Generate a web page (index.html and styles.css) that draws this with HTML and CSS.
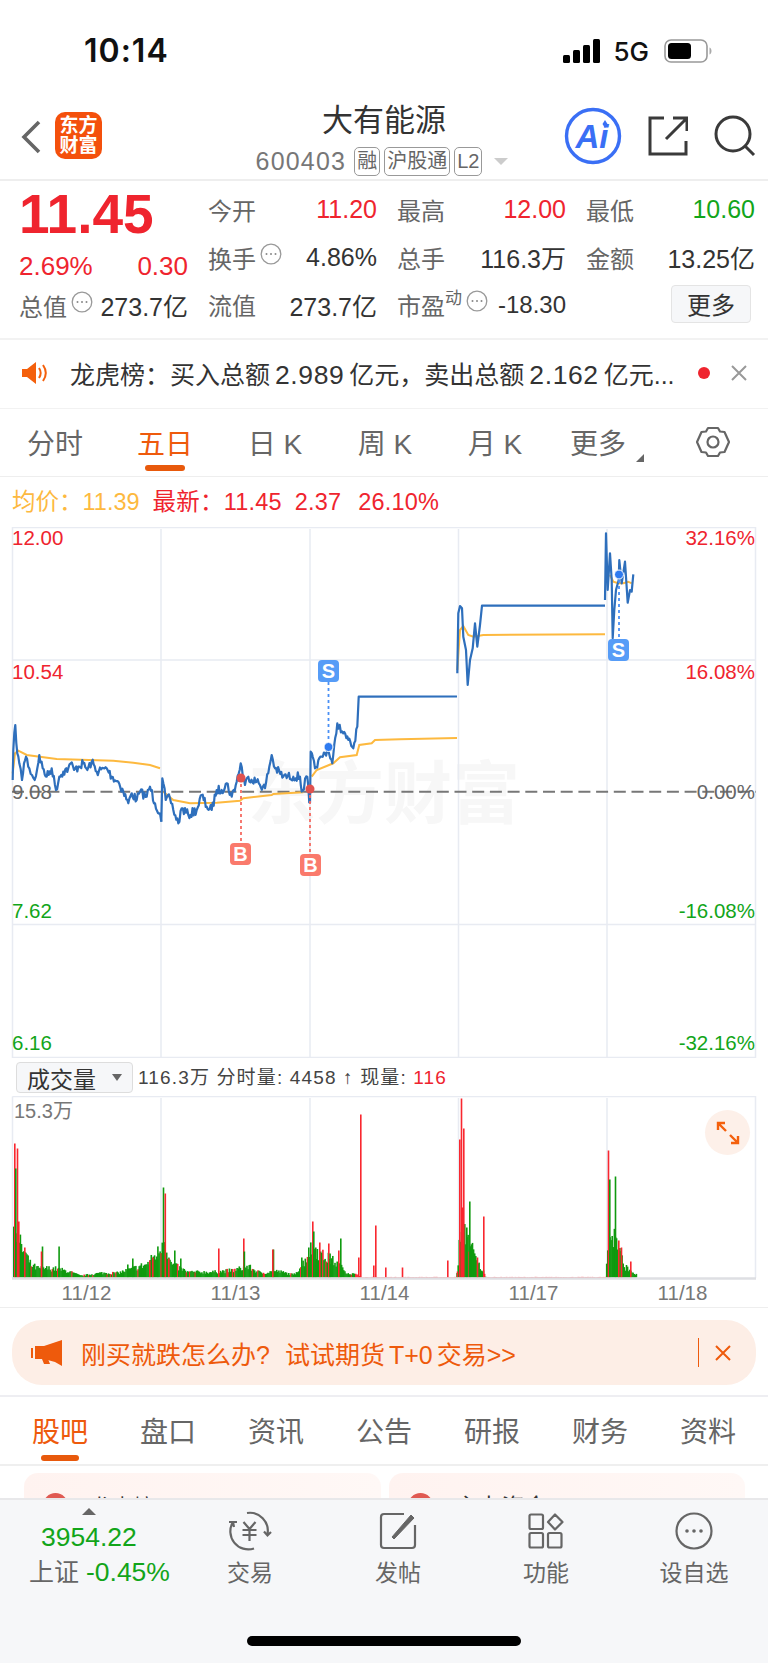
FILE: index.html
```html
<!DOCTYPE html>
<html lang="zh-CN">
<head>
  <meta charset="UTF-8" />
  <meta name="viewport" content="width=device-width, initial-scale=1" />
  <title>大有能源</title>
  <link rel="stylesheet" href="styles.css">
</head>
<body>

<!-- Status bar -->
<div class="status-bar">
  <span class="clock">10:14</span>
  <div class="status-right">
    <svg width="38" height="24" viewBox="0 0 38 24"><rect x="0" y="16" width="7" height="8" rx="1.5"/><rect x="10" y="11" width="7" height="13" rx="1.5"/><rect x="20" y="6" width="7" height="18" rx="1.5"/><rect x="30" y="0" width="7" height="24" rx="1.5"/></svg>
    <span class="net">5G</span>
    <svg width="48" height="24" viewBox="0 0 48 24"><rect x="1" y="1" width="42" height="22" rx="6" fill="none" stroke="#999" stroke-width="1.6"/><rect x="4" y="4" width="23" height="16" rx="3.5"/><path d="M45.5 8.5c1.5 .6 2 2 2 3.5s-.5 2.900-2 3.500z" fill="#aaa"/></svg>
  </div>
</div>

<!-- Header -->
<div class="header">
  <svg class="back" width="20" height="34" viewBox="0 0 20 34"><path d="M18 2L3 17l15 15" fill="none" stroke="#666" stroke-width="3.600"/></svg>
  <div class="logo"><span>东方</span><span>财富</span></div>
  <div class="title">
    <div class="name">大有能源</div>
    <div class="code">
      <span>600403</span>
      <span class="tag">融</span>
      <span class="tag">沪股通</span>
      <span class="tag">L2</span>
      <i class="tag-arrow"></i>
    </div>
  </div>
  <div class="head-icons">
    <svg width="58" height="58" viewBox="0 0 58 58">
      <circle cx="29" cy="29" r="26.500" fill="#fff" stroke="#3a6ff5" stroke-width="3.400"/>
      <text x="28" y="41" class="ai-text">Ai</text>
      <path d="M41 13l2.500 4 -2.500 4 -2.500-4z" fill="#3a6ff5"/>
    </svg>
    <svg width="40" height="40" viewBox="0 0 40 40" fill="none" stroke="#3a3a3a" stroke-width="3"><path d="M16 2H2v36h36V25"/><path d="M18 23L38 3M25 2h14v13" /></svg>
    <svg width="42" height="42" viewBox="0 0 42 42" fill="none" stroke="#3a3a3a" stroke-width="3"><circle cx="19" cy="19" r="17"/><path d="M31 31l9 9"/></svg>
  </div>
</div>

<!-- Quote -->
<div class="quote">
  <div class="quote-left">
    <div class="price">11.45</div>
    <div class="change"><span>2.69%</span><span>0.30</span></div>
    <div class="cell total">
      <label>总值<svg class="more-dot" width="22" height="22" viewBox="0 0 22 22"><use href="#dots"/></svg></label>
      <b>273.7亿</b>
    </div>
  </div>
  <div class="quote-grid">
    <div class="cell"><label>今开</label><b class="up">11.20</b></div>
    <div class="cell"><label>最高</label><b class="up">12.00</b></div>
    <div class="cell"><label>最低</label><b class="down">10.60</b></div>
    <div class="cell"><label>换手<svg class="more-dot" width="22" height="22" viewBox="0 0 22 22"><use href="#dots"/></svg></label><b>4.86%</b></div>
    <div class="cell"><label>总手</label><b>116.3万</b></div>
    <div class="cell"><label>金额</label><b>13.25亿</b></div>
    <div class="cell"><label>流值</label><b>273.7亿</b></div>
    <div class="cell"><label>市盈<sup>动</sup><svg class="more-dot" width="22" height="22" viewBox="0 0 22 22"><use href="#dots"/></svg></label><b class="pe">-18.30</b></div>
    <div class="cell more-cell"><button class="more-btn">更多</button></div>
  </div>
</div>

<!-- Notice -->
<div class="notice">
  <svg width="27" height="22" viewBox="0 0 27 22"><path d="M0 7h5l9-7v22l-9-7H0z" fill="#f4600c"/><path d="M17 6c2 3 2 7 0 10M21 3c3.500 5 3.500 11 0 16" fill="none" stroke="#f4600c" stroke-width="2"/></svg>
  <span class="notice-text">龙虎榜：买入总额<span class="num">2.989</span>亿元，卖出总额<span class="num">2.162</span>亿元...</span>
  <i class="red-dot"></i>
  <svg class="notice-x" width="16" height="16" viewBox="0 0 16 16"><path d="M1 1l14 14M15 1L1 15" stroke="#999" stroke-width="2"/></svg>
</div>

<!-- Period tabs -->
<div class="periods">
  <span>分时</span>
  <span class="active">五日</span>
  <span>日 K</span>
  <span>周 K</span>
  <span>月 K</span>
  <span class="has-corner">更多</span>
  <svg class="gear" width="34" height="32" viewBox="0 0 34 32" fill="none" stroke="#666" stroke-width="2.200"><path d="M12 2h10l2 3.500 4.500 .5L33 16l-4.500 10-4.500 .5L22 30H12l-2-3.500-4.500-.5L1 16 5.500 6 10 5.500z" stroke-linejoin="round"/><circle cx="17" cy="16" r="5.500"/></svg>
</div>

<!-- Legend -->
<div class="legend">
  <span class="avg">均价：11.39</span>
  <span class="latest">最新：11.45</span>
  <span class="latest">2.37</span>
  <span class="latest pct">26.10%</span>
</div>

<!-- Price chart -->
<svg class="price-chart" width="768" height="531" viewBox="0 527 768 531">
  <text x="248" y="818" class="watermark">东方财富</text>
  <path class="grid-line" d="M12.500 527.500H755.500V1057.500H12.500ZM12.500 660H755.500M12.500 924.500H755.500M161 529V1057M310 529V1057M458.500 529V1057M607 529V1057"/>
  <path d="M12 791.700H756" stroke="#777" stroke-width="2" stroke-dasharray="12 5.700"/>
  <g class="axis">
    <text x="12" y="545" class="up-fill">12.00</text>
    <text x="12" y="679" class="up-fill">10.54</text>
    <text x="12" y="799" class="flat-fill">9.08</text>
    <text x="12" y="918" class="down-fill">7.62</text>
    <text x="12" y="1050" class="down-fill">6.16</text>
    <text x="755" y="545" class="up-fill end">32.16%</text>
    <text x="755" y="679" class="up-fill end">16.08%</text>
    <text x="755" y="799" class="flat-fill end">0.00%</text>
    <text x="755" y="918" class="down-fill end">-16.08%</text>
    <text x="755" y="1050" class="down-fill end">-32.16%</text>
  </g>
  <g id="avgLines" fill="none" stroke="#fdb93f" stroke-width="2"></g>
  <g id="priceLines" fill="none" stroke="#2e6fbc" stroke-width="2.200" stroke-linejoin="round"></g>

  <g class="trade buy">
    <path d="M241 778V843M310 789V854"/>
    <circle cx="241" cy="778" r="4.500"/><circle cx="310" cy="789" r="4.500"/>
    <rect x="230" y="843" width="21" height="22" rx="4"/><rect x="300" y="854" width="21" height="22" rx="4"/>
    <text x="240.500" y="861">B</text><text x="310.500" y="872">B</text>
  </g>
  <g class="trade sell">
    <path d="M328.500 682V747M619 574V639"/>
    <circle cx="328.500" cy="747" r="4.500"/><circle cx="619" cy="574.500" r="4.500"/>
    <rect x="318" y="660" width="21" height="22" rx="4"/><rect x="608" y="639" width="21" height="22" rx="4"/>
    <text x="328.500" y="678">S</text><text x="618.500" y="657">S</text>
  </g>
</svg>

<!-- Volume toolbar -->
<div class="vol-bar">
  <div class="vol-select"><span>成交量</span><i></i></div>
  <span class="vol-info">116.3万 分时量: 4458 ↑ 现量: <em>116</em></span>
</div>

<!-- Volume chart -->
<div class="vol-wrap">
  <svg width="768" height="184" viewBox="0 1096 768 184">
    <path class="grid-line" d="M12.500 1096.500H755.500V1278M12.500 1096.500V1278M161 1098V1278M310 1098V1278M458.500 1098V1278M607 1098V1278"/>
    <g id="volBars"></g>
    <path d="M12 1278.500H756" stroke="#dedfe3" stroke-width="2.500"/>
    <text x="14" y="1118" class="vol-max">15.3万</text>
  </svg>
  <div class="expand">
    <svg width="24" height="24" viewBox="0 0 24 24" fill="none" stroke="#f4600c" stroke-width="2.400"><path d="M2 9V2h7M2 2l8 8M22 15v7h-7M22 22l-8-8"/></svg>
  </div>
</div>

<div class="dates">
  <span>11/12</span><span>11/13</span><span>11/14</span><span>11/17</span><span>11/18</span>
</div>

<!-- Promo -->
<div class="promo-row">
  <div class="promo">
    <svg width="31" height="26" viewBox="0 0 31 26"><path d="M0 8h2v10H0zM4 6h9L31 0v26L24 22v0l-11-3H4z" fill="#ee5a0c"/><path d="M11 19h6l2 5h-6z" fill="#ee5a0c"/></svg>
    <span class="promo-text">刚买就跌怎么办?<span class="try">试试期货</span><span class="plus">T+0</span>交易&gt;&gt;</span>
    <i class="promo-sep"></i>
    <svg width="16" height="16" viewBox="0 0 16 16"><path d="M1 1l14 14M15 1L1 15" stroke="#ee5a0c" stroke-width="2"/></svg>
  </div>
</div>

<!-- Content tabs -->
<div class="tabs">
  <span class="active">股吧</span>
  <span>盘口</span>
  <span>资讯</span>
  <span>公告</span>
  <span>研报</span>
  <span>财务</span>
  <span>资料</span>
</div>

<!-- Cards, cut off by the bottom bar -->
<div class="cards">
  <div class="card"><i></i><span class="short">龙虎榜</span></div>
  <div class="card"><i></i><span>主力资金</span></div>
</div>

<!-- Bottom bar -->
<div class="bottom-bar">
  <div class="index">
    <i class="index-arrow"></i>
    <div class="index-value">3954.22</div>
    <div class="index-name">上证 <em>-0.45%</em></div>
  </div>
  <div class="bar-item">
    <svg width="44" height="40" viewBox="0 0 44 40" fill="none" stroke="#666" stroke-width="2.200">
      <path d="M19 2A18 18 0 0 1 39.500 23M36 20.500l3.500 4 3.500-3.500"/>
      <path d="M26 37.500A18 18 0 0 1 5 11M1 11h8M5 11l1 5"/>
      <path d="M15.500 11l6 7 6-7M14.500 19h14M14.500 24h14M21.500 18v12"/>
    </svg>
    <span>交易</span>
  </div>
  <div class="bar-item">
    <svg width="38" height="38" viewBox="0 0 38 38" fill="none" stroke="#666" stroke-width="2.200">
      <path d="M25 2H5Q2 2 2 5v28q0 3 3 3h28q3 0 3-3V13"/>
      <path d="M13 25L32 3l3 3L15 27z" fill="#666" stroke-width="1"/>
    </svg>
    <span>发帖</span>
  </div>
  <div class="bar-item">
    <svg width="36" height="36" viewBox="0 0 36 36" fill="none" stroke="#666" stroke-width="2.200">
      <rect x="1.500" y="1.500" width="13.500" height="14.500" rx="1.500"/>
      <rect x="1.500" y="20" width="13.500" height="14.500" rx="1.500"/>
      <rect x="20" y="20" width="13.500" height="14.500" rx="1.500"/>
      <path d="M27 1.500L34.500 9 27 16.500 20 9z" stroke-linejoin="round"/>
    </svg>
    <span>功能</span>
  </div>
  <div class="bar-item">
    <svg width="38" height="38" viewBox="0 0 38 38"><circle cx="19" cy="19" r="17.500" fill="none" stroke="#666" stroke-width="2.200"/><circle cx="12" cy="19" r="1.800" fill="#666"/><circle cx="19" cy="19" r="1.800" fill="#666"/><circle cx="26" cy="19" r="1.800" fill="#666"/></svg>
    <span>设自选</span>
  </div>
  <i class="home-bar"></i>
</div>

<!-- shared icon -->
<svg width="0" height="0" class="defs">
  <symbol id="dots" viewBox="0 0 22 22">
    <circle cx="11" cy="11" r="9.800" fill="none" stroke="#999" stroke-width="1.300"/>
    <circle cx="6.500" cy="11" r="1" fill="#888"/><circle cx="11" cy="11" r="1" fill="#888"/><circle cx="15.500" cy="11" r="1" fill="#888"/>
  </symbol>
</svg>

<script src="chart.js"></script>
</body>
</html>
```

FILE: styles.css
```css
* {
  box-sizing: border-box;
}
html, body {
  margin: 0;
  padding: 0;
}
body {
  width: 768px;
  height: 1663px;
  overflow: hidden;
  background: #fff;
  color: #333;
  font-family: "Liberation Sans", "Noto Sans CJK SC", sans-serif;
}
i, em {
  font-style: normal;
}

/* status bar */
.status-bar {
  height: 100px;
  padding: 34px 56px 0 84px;
  display: flex;
  justify-content: space-between;
  align-items: flex-start;
}
.clock {
  font-family: Inter, sans-serif;
  font-size: 32px;
  font-weight: 600;
  letter-spacing: 1px;
  line-height: 34px;
  color: #111;
}
.status-right {
  display: flex;
  align-items: center;
  gap: 12px;
  height: 34px;
}
.net {
  font-family: Inter, sans-serif;
  font-size: 26px;
  font-weight: 500;
  color: #111;
  margin-right: 3px;
}

/* header */
.header {
  height: 81px;
  border-bottom: 2px solid #eee;
  display: flex;
  position: relative;
  padding-left: 21px;
}
.back {
  margin-top: 20px;
}
.logo {
  width: 47px;
  height: 47px;
  margin: 12px 0 0 14px;
  background: #f4500c;
  border-radius: 10px;
  color: #fff;
  font-size: 19px;
  font-weight: 700;
  line-height: 20px;
  display: flex;
  flex-direction: column;
  align-items: center;
  justify-content: center;
}
.title {
  position: absolute;
  left: 0;
  right: 0;
  top: 3px;
  text-align: center;
}
.name {
  font-size: 31px;
  line-height: 36px;
  color: #333;
}
.code {
  display: flex;
  justify-content: center;
  align-items: center;
  gap: 4px;
  margin-top: 8px;
  padding-right: 4px;
  font-size: 25px;
  letter-spacing: 1.2px;
  color: #777;
}
.code span:first-child {
  margin-right: 4px;
}
.tag {
  height: 29px;
  line-height: 26px;
  padding: 0 2px;
  border: 1px solid #999;
  border-radius: 5px;
  font-size: 20px;
  letter-spacing: 0;
  color: #666;
}
.tag-arrow {
  margin-left: 8px;
  border-left: 7px solid transparent;
  border-right: 7px solid transparent;
  border-top: 7px solid #ccc;
}
.head-icons {
  position: absolute;
  right: 12px;
  top: 7px;
  display: flex;
  align-items: center;
  gap: 26px;
}
.ai-text {
  font-family: "Liberation Sans", sans-serif;
  font-size: 33px;
  font-weight: 700;
  font-style: italic;
  text-anchor: middle;
  fill: #3a6ff5;
}

/* quote */
.quote {
  height: 159px;
  padding: 5px 13px 0 19px;
  border-bottom: 2px solid #f2f2f2;
  display: flex;
  font-size: 24px;
}
.quote-left {
  width: 169px;
  margin-right: 20px;
  flex-shrink: 0;
}
.price {
  height: 56px;
  line-height: 56px;
  font-size: 55px;
  font-weight: 700;
  color: #ef242e;
}
.change {
  height: 48px;
  line-height: 48px;
  font-size: 26px;
  color: #ef242e;
  display: flex;
  justify-content: space-between;
}
.quote-grid {
  flex: 1;
  display: grid;
  grid-template-columns: repeat(3, 169px);
  grid-auto-rows: 47.5px;
  column-gap: 20px;
}
.cell {
  display: flex;
  justify-content: space-between;
  align-items: center;
  white-space: nowrap;
}
.cell label {
  display: flex;
  align-items: center;
  color: #666;
}
.cell b {
  font-size: 25px;
  font-weight: 400;
  color: #333;
}
.cell b.up {
  color: #ef242e;
}
.cell b.down {
  color: #12a51a;
}
.cell b.pe {
  font-size: 24px;
}
.cell sup {
  font-size: 17px;
  line-height: 17px;
  margin-bottom: 13px;
}
.more-dot {
  margin: 0 0 7px 4px;
}
.total {
  height: 30px;
}
.more-cell {
  justify-content: flex-end;
}
.more-btn {
  width: 80px;
  height: 38px;
  padding: 0;
  margin: 0 4px 2px 0;
  background: #f6f7f9;
  border: 1px solid #e4e4e4;
  border-radius: 4px;
  font: inherit;
  color: #333;
}

/* notice */
.notice {
  height: 69px;
  padding: 0 0 3px 22px;
  border-bottom: 1px solid #f2f2f2;
  display: flex;
  align-items: center;
}
.notice-text {
  margin-left: 21px;
  width: 619px;
  white-space: nowrap;
  font-size: 25px;
  color: #333;
}
.notice-text .num {
  margin: 0 5px;
  font-size: 26.500px;
  letter-spacing: 0.6px;
}
.red-dot {
  width: 12px;
  height: 12px;
  margin-left: 9px;
  border-radius: 50%;
  background: #ef242e;
}
.notice-x {
  margin-left: 21px;
}

/* period tabs */
.periods {
  height: 68px;
  padding: 0 38px 2px 0;
  border-bottom: 1px solid #eee;
  display: flex;
  align-items: center;
  font-size: 28px;
  color: #666;
}
.periods span {
  width: 110px;
  text-align: center;
  position: relative;
}
.periods .active {
  color: #ee5a0c;
}
.periods .active::after {
  content: "";
  position: absolute;
  left: 35px;
  top: 43px;
  width: 40px;
  height: 6px;
  border-radius: 3px;
  background: #e8590c;
}
.periods .has-corner {
  margin-left: -7px;
}
.has-corner::after {
  content: "";
  position: absolute;
  left: 93px;
  top: 32px;
  border-left: 8px solid transparent;
  border-bottom: 8px solid #666;
}
.gear {
  margin-left: auto;
}

/* legend */
.legend {
  height: 50px;
  padding: 4px 0 0 12px;
  display: flex;
  align-items: flex-start;
  gap: 13px;
  font-size: 23.500px;
  line-height: 42px;
}
.avg {
  color: #fdb93f;
}
.latest {
  letter-spacing: 0.2px;
  color: #ef242e;
}
.pct {
  margin-left: 4px;
}

/* price chart */
.price-chart {
  display: block;
}
.grid-line {
  fill: none;
  stroke: #e8ebf2;
  stroke-width: 1.500;
}
.axis text {
  font-size: 20.500px;
}
.axis .end {
  text-anchor: end;
}
.up-fill {
  fill: #ef242e;
}
.flat-fill {
  fill: #666;
}
.down-fill {
  fill: #12a51a;
}
.watermark {
  font-size: 68px;
  font-weight: 700;
  fill: #f7f7f7;
}
.trade path {
  fill: none;
  stroke-width: 1.800;
  stroke-dasharray: 3 3;
}
.trade text {
  font-size: 20px;
  font-weight: 700;
  fill: #fff;
  text-anchor: middle;
}
.buy path {
  stroke: #f56b62;
}
.buy circle {
  fill: #e0524f;
}
.buy rect {
  fill: #fa7a6c;
}
.sell path {
  stroke: #4a90f5;
}
.sell circle {
  fill: #2f7bf0;
  stroke: #fff;
}
.sell rect {
  fill: #569cf7;
}

/* volume */
.vol-bar {
  height: 38px;
  padding: 4px 0 0 16px;
  display: flex;
  align-items: flex-start;
}
.vol-select {
  width: 117px;
  height: 31px;
  padding: 0 10px;
  background: #f6f7f9;
  border: 1px solid #ddd;
  border-radius: 4px;
  display: flex;
  align-items: center;
  justify-content: space-between;
  font-size: 23px;
  color: #333;
}
.vol-select i {
  border-left: 5px solid transparent;
  border-right: 5px solid transparent;
  border-top: 7px solid #666;
}
.vol-info {
  margin-left: 5px;
  line-height: 31px;
  font-size: 19px;
  letter-spacing: 1.150px;
  white-space: nowrap;
  color: #444;
}
.vol-info em {
  color: #ef242e;
}
.vol-wrap {
  height: 184px;
  position: relative;
}
.vol-wrap svg {
  display: block;
}
.vol-max {
  font-size: 20px;
  fill: #777;
}
.expand {
  position: absolute;
  left: 705px;
  top: 14px;
  width: 45px;
  height: 45px;
  border-radius: 50%;
  background: #fdf0e9;
  display: flex;
  align-items: center;
  justify-content: center;
}
.dates {
  height: 28px;
  padding-left: 12px;
  border-bottom: 1px solid #eee;
  display: grid;
  grid-template-columns: repeat(5, 149px);
  justify-items: center;
  font-size: 20.500px;
  line-height: 26px;
  color: #777;
}

/* promo */
.promo-row {
  height: 89px;
  padding: 12px 12px 0;
  border-bottom: 2px solid #eeeef2;
}
.promo {
  height: 65px;
  padding: 0 25px 0 19px;
  border-radius: 30px;
  background: #fdeee6;
  display: flex;
  align-items: center;
}
.promo-text {
  margin-left: 19px;
  font-size: 25px;
  white-space: nowrap;
  color: #ee5a0c;
}
.promo-text .try {
  margin-left: 15px;
}
.promo-text .plus {
  margin: 0 4px;
}
.promo-sep {
  width: 1px;
  height: 29px;
  margin-left: auto;
  margin-right: 16px;
  background: #ee5a0c;
}

/* content tabs */
.tabs {
  height: 69px;
  padding: 0 0 2px 6px;
  border-bottom: 2px solid #efefef;
  display: grid;
  grid-template-columns: repeat(7, 108px);
  align-items: center;
  font-size: 28px;
  color: #666;
}
.tabs span {
  text-align: center;
  position: relative;
}
.tabs .active {
  color: #ee5a0c;
}
.tabs .active::after {
  content: "";
  position: absolute;
  left: 35px;
  top: 45px;
  width: 38px;
  height: 6px;
  border-radius: 3px;
  background: #e8590c;
}

/* cards */
.cards {
  height: 32px;
  padding: 7px 23px 0 24px;
  display: flex;
  gap: 8px;
  overflow: hidden;
}
.card {
  flex: 1;
  height: 60px;
  padding: 20px 0 0 19px;
  border-radius: 14px;
  background: linear-gradient(90deg, #fff3f0, #fff8f6);
  display: flex;
  gap: 23px;
  font-size: 23px;
  line-height: 22px;
  color: #333;
}
.card i {
  width: 25px;
  height: 25px;
  border-radius: 50%;
  background: #e05a52;
}
.card span {
  margin-top: 3px;
}
.card .short {
  font-size: 21px;
}

/* bottom bar */
.bottom-bar {
  height: 166px;
  border-top: 2px solid #e8e8ea;
  background: #f6f7f9;
  display: flex;
  position: relative;
  padding-left: 29px;
}
.index {
  width: 147px;
  font-size: 25px;
  position: relative;
}
.index-arrow {
  position: absolute;
  left: 53px;
  top: 8px;
  border-left: 7px solid transparent;
  border-right: 7px solid transparent;
  border-bottom: 7px solid #666;
}
.index-value {
  margin: 23px 0 0 12px;
  font-size: 26.500px;
  line-height: 28px;
  color: #12a51a;
}
.index-name {
  margin-top: 7px;
  line-height: 28px;
  white-space: nowrap;
  color: #666;
}
.index-name em {
  font-size: 26.500px;
  color: #12a51a;
}
.bar-item {
  width: 148px;
  padding-top: 11px;
  display: flex;
  flex-direction: column;
  align-items: center;
  justify-content: flex-start;
  font-size: 23px;
  color: #666;
}
.bar-item svg {
  height: 40px;
}
.bar-item span {
  margin-top: 8px;
  line-height: 28px;
}
.home-bar {
  position: absolute;
  left: 247px;
  top: 136px;
  width: 274px;
  height: 10px;
  border-radius: 5px;
  background: #000;
}
.defs {
  position: absolute;
}
```

FILE: chart.js
```js
// price / volume data for the five day chart, page pixels
const svgNS = "http://www.w3.org/2000/svg";

let seed = 7;
function rnd() {
  seed = (seed * 16807) % 2147483647;
  return seed / 2147483647;
}

function toLine(points) {
  return points.map((p, i) => (i ? "L" : "M") + p[0].toFixed(1) + " " + p[1].toFixed(1)).join("");
}

function addPath(parent, d) {
  const path = document.createElementNS(svgNS, "path");
  path.setAttribute("d", d);
  document.getElementById(parent).appendChild(path);
}

// traced from the 3x crops: [x, y] offset by origin, divided by 3
function traced(list, ox, oy) {
  return list.map(p => [ox + p[0] / 3, oy + p[1] / 3]);
}

// fill in between traced points with small ticks
function jagged(points, amp) {
  const out = [];
  for (let i = 0; i < points.length - 1; i++) {
    const a = points[i];
    const b = points[i + 1];
    const steps = Math.max(1, Math.round((b[0] - a[0]) / 1.1));
    for (let s = 0; s < steps; s++) {
      const t = s / steps;
      const jitter = s === 0 ? 0 : (rnd() - 0.5) * amp;
      out.push([a[0] + (b[0] - a[0]) * t, a[1] + (b[1] - a[1]) * t + jitter]);
    }
  }
  out.push(points[points.length - 1]);
  return out;
}

const dayOne = traced([[38,780],[40,690],[46,615],[52,700],[58,730],[66,780],[72,730],[78,710],[88,745],[96,765],[104,780],[112,745],[118,705],[128,745],[140,770],[155,745],[168,810],[178,770],[190,755],[205,745],[212,730],[222,750],[235,740],[250,730],[262,750],[275,725],[290,755],[320,745],[335,770],[355,785],[370,815],[385,850],[395,820],[410,840],[420,815],[440,830],[450,800],[465,850],[480,880],[484,905]], 0, 520);
const dayTwo = traced([[484,905],[487,775],[497,840],[510,835],[520,870],[535,910],[545,865],[565,885],[590,870],[605,825],[620,860],[635,870],[650,810],[665,810],[680,790],[695,830],[710,785],[722,730],[735,795],[745,770],[770,785],[795,805],[815,705],[825,745],[850,770],[880,770],[900,770],[905,815],[922,770],[928,850]], 0, 520);
const dayThree = traced([[930,850],[932,695],[945,745],[965,710],[985,690],[997,730],[1012,610],[1030,640],[1045,660],[1060,685],[1072,620],[1076,530]], 0, 520);

addPath("priceLines", toLine(jagged(dayOne, 9)));
addPath("priceLines", toLine(jagged(dayTwo, 9)));
addPath("priceLines", toLine(jagged(dayThree, 7).concat([[457, 696.5]])));
addPath("priceLines", toLine(traced([[232,460],[235,280],[240,258],[246,265],[250,350],[258,390],[263,495],[270,420],[278,385],[285,310],[292,380],[300,315],[306,257],[675,257]], 380, 520)));
addPath("priceLines", toLine(traced([[675,240],[678,40],[683,210],[690,100],[695,180],[698,355],[703,270],[708,210],[716,180],[718,120],[725,190],[735,125],[743,248],[750,210],[755,215],[760,163]], 380, 520)));

addPath("avgLines", toLine(traced([[38,760],[45,700],[55,692],[80,705],[170,717],[340,722],[400,728],[450,735],[480,745]], 0, 520)));
addPath("avgLines", toLine(traced([[490,815],[520,840],[570,850],[650,848],[720,842],[730,835],[815,825],[820,822],[910,817]], 0, 520)));
addPath("avgLines", toLine(traced([[935,770],[950,750],[1000,730],[1020,712],[1070,705],[1078,675],[1115,670],[1125,660],[1200,658]], 0, 520).concat([[457, 738]])));
addPath("avgLines", toLine(traced([[232,450],[240,330],[250,318],[265,345],[280,350],[310,345],[675,343]], 380, 520)));
addPath("avgLines", toLine(traced([[690,165],[700,185],[715,190],[730,190],[745,185],[755,190]], 380, 520)));

// volume: envelope for the small bars, [x, height]
const envelope = [[13,60],[20,35],[25,25],[30,14],[37,10],[53,10],[67,7],[80,2],[100,5],[117,5],[133,10],[147,15],[159,30],[163,45],[170,15],[187,6],[213,6],[233,8],[247,12],[260,5],[277,7],[293,3],[302,15],[312,35],[320,25],[333,18],[347,5],[357,3],[360,0.5],[456,0.5],[459,40],[465,50],[470,35],[477,15],[482,8],[485,0.5],[605,0.5],[608,45],[614,45],[620,25],[623,12],[628,10],[634,4],[636,3]];
const spikes = [[14,134,"r"],[16.7,129,"r"],[15,109,"g"],[18,56,"r"],[24,30,"r"],[41.7,31,"g"],[40.7,26,"r"],[58.3,31,"g"],[132,19,"g"],[127,13,"g"],[152,20,"r"],[149,17,"r"],[157,18,"g"],[162.7,90,"g"],[164.5,84,"r"],[174,27,"g"],[180,19,"g"],[168,19,"r"],[218,29,"r"],[243,39,"r"],[243.6,26,"g"],[272.7,28,"g"],[272,28,"r"],[301,20,"g"],[308,30,"g"],[312,56,"r"],[313,46,"g"],[319,35,"r"],[315,30,"g"],[328,34,"r"],[329.3,24,"g"],[340,39,"g"],[338,27,"r"],[360,163,"r"],[375,52,"r"],[373,12,"r"],[385,10,"r"],[358,20,"r"],[401.7,10,"r"],[447,17,"r"],[456.7,6,"r"],[459,138,"r"],[460.7,179,"r"],[463,149,"r"],[461.7,70,"r"],[469,76,"g"],[466,50,"g"],[483,61,"r"],[476.7,20,"r"],[607.7,127,"r"],[609,98,"g"],[614.7,101,"g"],[618,37,"r"],[620.7,30,"r"],[630,16,"r"]];
const barColor = { r: "#f9272f", g: "#0f9a0f" };

function envAt(x) {
  for (let i = 0; i < envelope.length - 1; i++) {
    const a = envelope[i];
    const b = envelope[i + 1];
    if (x >= a[0] && x <= b[0]) return a[1] + (b[1] - a[1]) * (x - a[0]) / (b[0] - a[0]);
  }
  return 0;
}

const bars = document.getElementById("volBars");
function addBar(x, h, color) {
  const rect = document.createElementNS(svgNS, "rect");
  rect.setAttribute("x", x);
  rect.setAttribute("y", 1277.5 - h);
  rect.setAttribute("width", 1.6);
  rect.setAttribute("height", h);
  rect.setAttribute("fill", color);
  bars.appendChild(rect);
}

for (let x = 13; x < 636; x += 1.1) {
  const env = envAt(x);
  const h = env * (0.6 + rnd() * 0.6);
  const thin = x > 355 && x < 456 || x > 486 && x < 605;
  addBar(x, h, thin || rnd() < 0.1 ? barColor.r : barColor.g);
}
spikes.forEach(s => addBar(s[0], s[1], barColor[s[2]]));
```
